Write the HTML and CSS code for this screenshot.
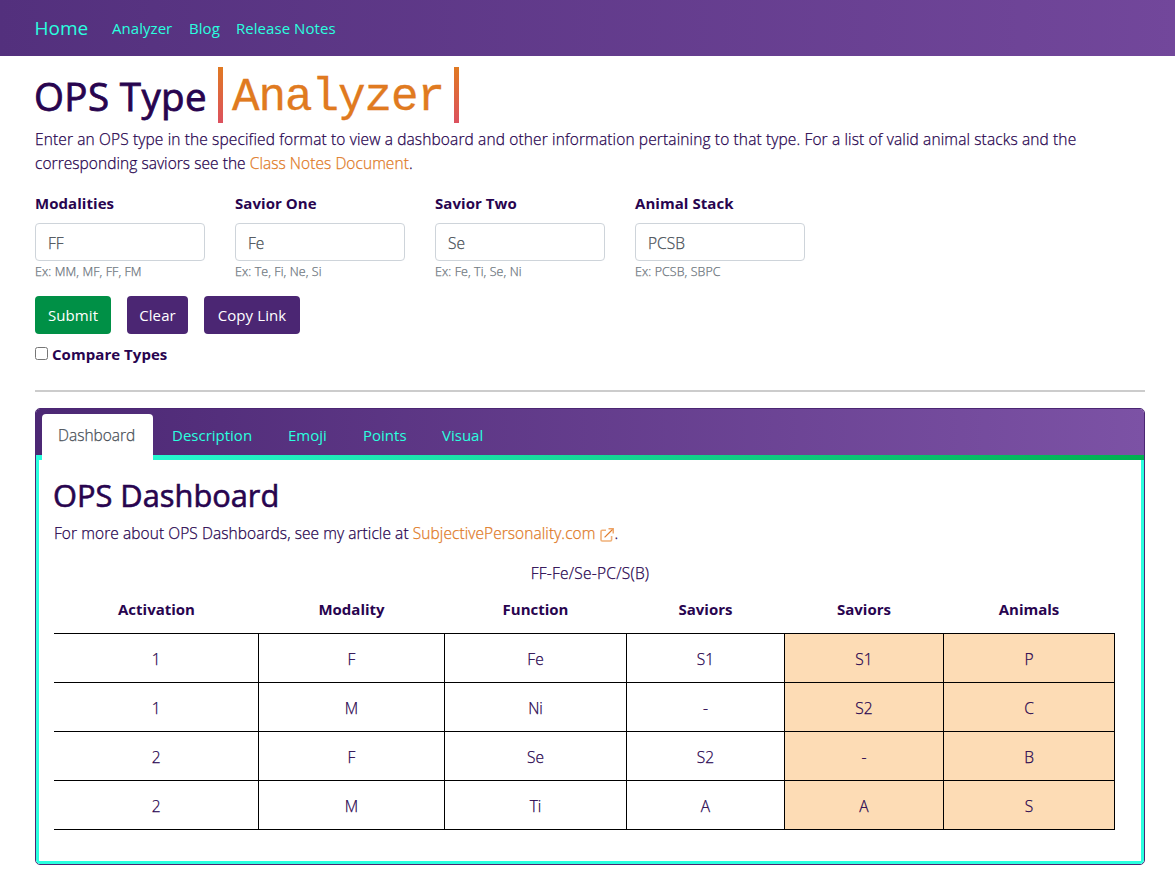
FILE: index.html
```html
<!DOCTYPE html>
<html lang="en">
<head>
<meta charset="utf-8">
<title>OPS Type Analyzer</title>
<link rel="stylesheet" href="styles.css">
</head>
<body>
<nav class="navbar">
  <a class="brand" href="#">Home</a>
  <a class="nav-link nl-analyzer" href="#">Analyzer</a>
  <a class="nav-link nl-blog" href="#">Blog</a>
  <a class="nav-link nl-notes" href="#">Release Notes</a>
</nav>
<main class="page">
  <h1 class="title"><span class="title-text">OPS Type</span><span class="title-accent">Analyzer</span></h1>
  <p class="intro"><span class="line-one">Enter an OPS type in the specified format to view a dashboard and other information pertaining to that type. For a list of valid animal stacks and the</span><br><span class="line-two">corresponding saviors see the <a class="link" href="#">Class Notes Document</a>.</span></p>
  <form class="form">
    <div class="fields">
      <div class="field"><label class="label" for="f1"><span>Modalities</span></label><input class="input" id="f1" value="FF"><small class="help">Ex: MM, MF, FF, FM</small></div>
      <div class="field"><label class="label" for="f2"><span>Savior One</span></label><input class="input" id="f2" value="Fe"><small class="help">Ex: Te, Fi, Ne, Si</small></div>
      <div class="field"><label class="label" for="f3"><span>Savior Two</span></label><input class="input" id="f3" value="Se"><small class="help">Ex: Fe, Ti, Se, Ni</small></div>
      <div class="field"><label class="label" for="f4"><span>Animal Stack</span></label><input class="input" id="f4" value="PCSB"><small class="help">Ex: PCSB, SBPC</small></div>
    </div>
    <div class="buttons">
      <button class="btn btn-submit" type="button">Submit</button>
      <button class="btn btn-clear" type="button">Clear</button>
      <button class="btn btn-copy" type="button">Copy Link</button>
    </div>
    <label class="compare"><input class="check" type="checkbox"><span>Compare Types</span></label>
  </form>
  <hr class="rule">
  <section class="card">
    <header class="tabs">
      <a class="tab tab-active" href="#">Dashboard</a>
      <a class="tab tab-description" href="#">Description</a>
      <a class="tab tab-emoji" href="#">Emoji</a>
      <a class="tab tab-points" href="#">Points</a>
      <a class="tab tab-visual" href="#">Visual</a>
    </header>
    <div class="card-body">
      <h2 class="subtitle">OPS Dashboard</h2>
      <p class="article"><span>For more about OPS Dashboards, see my article at <a class="link" href="#">SubjectivePersonality.com</a></span><svg class="external" viewBox="0 0 14 14" width="14" height="14"><path d="M6 2.2H2.2Q1 2.2 1 3.4V11.8Q1 13 2.2 13H10.4Q11.6 13 11.6 11.8V8" fill="none" stroke="#f0b078" stroke-width="1.6"/><path d="M4.6 9.4L13 1" fill="none" stroke="#e07b28" stroke-width="1.2"/><path d="M8.5 .8H13.2V5.5" fill="none" stroke="#eda264" stroke-width="1.4"/></svg><span>.</span></p>
      <p class="code">FF-Fe/Se-PC/S(B)</p>
      <table class="grid">
        <colgroup><col class="c1"><col class="c2"><col class="c3"><col class="c4"><col class="c5"><col class="c6"></colgroup>
        <thead><tr><th>Activation</th><th>Modality</th><th>Function</th><th>Saviors</th><th>Saviors</th><th>Animals</th></tr></thead>
        <tbody>
          <tr><td>1</td><td>F</td><td>Fe</td><td>S1</td><td class="hl">S1</td><td class="hl">P</td></tr>
          <tr><td>1</td><td>M</td><td>Ni</td><td>-</td><td class="hl">S2</td><td class="hl">C</td></tr>
          <tr><td>2</td><td>F</td><td>Se</td><td>S2</td><td class="hl">-</td><td class="hl">B</td></tr>
          <tr><td>2</td><td>M</td><td>Ti</td><td>A</td><td class="hl">A</td><td class="hl">S</td></tr>
        </tbody>
      </table>
    </div>
  </section>
</main>
</body>
</html>
```

FILE: styles.css
```css
* { box-sizing: border-box; }
body {
  margin: 0;
  background: #fff;
  color: #28044f;
  font-family: "Open Sans", "Noto Sans", sans-serif;
  font-size: 15px;
  font-weight: 400;
  line-height: 24px;
}
a { text-decoration: none; }
h1, h2, p { margin: 0; font-weight: 500; white-space: nowrap; }
p, .input, .help, .grid td, .tab-active {
  font-weight: 300;
  font-size: 15.5px;
  -webkit-text-stroke: .25px currentColor;
}
.navbar {
  display: flex;
  align-items: center;
  height: 56px;
  padding: 0 35px 0 34px;
  background: linear-gradient(90deg, #53307d, #72479b);
}
.brand, .nav-link, .tab { color: #2affdf; white-space: nowrap; }
.brand { font-size: 19px; width: 78px; padding-left: .5px; }
.nav-link { letter-spacing: .05px; }
.nl-analyzer { width: 77px; }
.nl-blog { width: 47px; }
.page { padding: 11px 30px 0 35px; }
.title { display: flex; height: 56px; line-height: 59px; font-size: 38.5px; }
.title-text { width: 183px; letter-spacing: .4px; margin-left: -1px; margin-right: 1px; -webkit-text-stroke: .8px #28044f; }
.title-accent {
  width: 241px;
  border: 0 solid;
  border-width: 0 5px;
  border-image: linear-gradient(#e07a20, #dc5060) 1;
  padding-left: 9px;
  color: #e07a20;
  font-family: "Liberation Mono", monospace;
  font-size: 46px;
  font-weight: 400;
  line-height: 63px;
  letter-spacing: -1.1px;
  -webkit-text-stroke: .3px #e07a20;
}
.intro { margin-top: 4px; }
.line-one { letter-spacing: .13px; }
.line-two { letter-spacing: .05px; }
.link { color: #e07b28; }
.fields { display: flex; gap: 30px; margin-top: 16px; }
.field { width: 170px; }
.label { display: block; height: 32px; font-weight: 700; letter-spacing: .05px; white-space: nowrap; }
.input {
  display: block;
  width: 170px;
  height: 38px;
  border: 1px solid #ced4da;
  border-radius: 4px;
  padding: 2px 12px 0;
  background: #fff;
  color: #495057;
  font-family: inherit;
}
.help { display: block; height: 20px; color: #6c757d; font-size: 12.4px; line-height: 21px; letter-spacing: .12px; white-space: nowrap; }
.buttons { display: flex; gap: 16px; margin-top: 15px; }
.btn {
  height: 38px;
  border: 0;
  border-radius: 4px;
  padding: 0;
  background: #4b2673;
  color: #fff;
  font: inherit;
  letter-spacing: .1px;
  white-space: nowrap;
}
.btn-submit { width: 76px; background: #009046; }
.btn-clear { width: 61px; }
.btn-copy { width: 96px; }
.compare { display: flex; align-items: center; gap: 4px; height: 24px; margin-top: 8px; font-weight: 700; letter-spacing: .05px; }
.check { width: 13px; height: 13px; margin: 0 0 1px; }
.rule { height: 2px; margin: 24px 0 16px; border: 0; background: #ccc; }
.card { height: 457px; border: 1px solid #4b2673; border-radius: 5px; overflow: hidden; }
.tabs {
  display: flex;
  height: 51px;
  padding: 5px 0 0 6px;
  border-bottom: 5px solid;
  border-image: linear-gradient(90deg, #2affdf, #00b050) 1;
  background: linear-gradient(90deg, #4c2874, #7c52a5) padding-box;
}
.tab { height: 46px; padding-top: 9px; }
.tab-active {
  width: 111px;
  margin-right: 19px;
  padding-left: 16px;
  border-radius: 4px 4px 0 0;
  background: #fff;
  color: #495057;
}
.tab-description { width: 116px; }
.tab-emoji { width: 75px; }
.tab-points { width: 79px; }
.card-body {
  height: 404px;
  border: 3px solid #2affdf;
  border-top: 0;
  border-radius: 0 0 4px 4px;
  padding: 15px 15px 0;
}
.subtitle { font-size: 30.8px; line-height: 40px; margin-left: -1px; -webkit-text-stroke: .6px #28044f; }
.article { display: flex; margin-top: 6px; letter-spacing: .07px; }
.external { margin: 7px 0 0 5px; }
.code { margin-top: 16px; text-align: center; letter-spacing: .25px; }
.grid { width: 1060px; table-layout: fixed; border-collapse: collapse; text-align: center; }
.c1 { width: 204px; }
.c2 { width: 186px; }
.c3 { width: 182px; }
.c4 { width: 158px; }
.c5 { width: 159px; }
.c6 { width: 171px; }
.grid th { height: 48px; padding: 0 0 0 1px; font-weight: 700; }
.grid td { height: 49px; padding: 2px 0 0 1px; border: 1px solid #000; }
.grid td:first-child { border-left: 0; }
.hl { background: #fddcb5; }
```
